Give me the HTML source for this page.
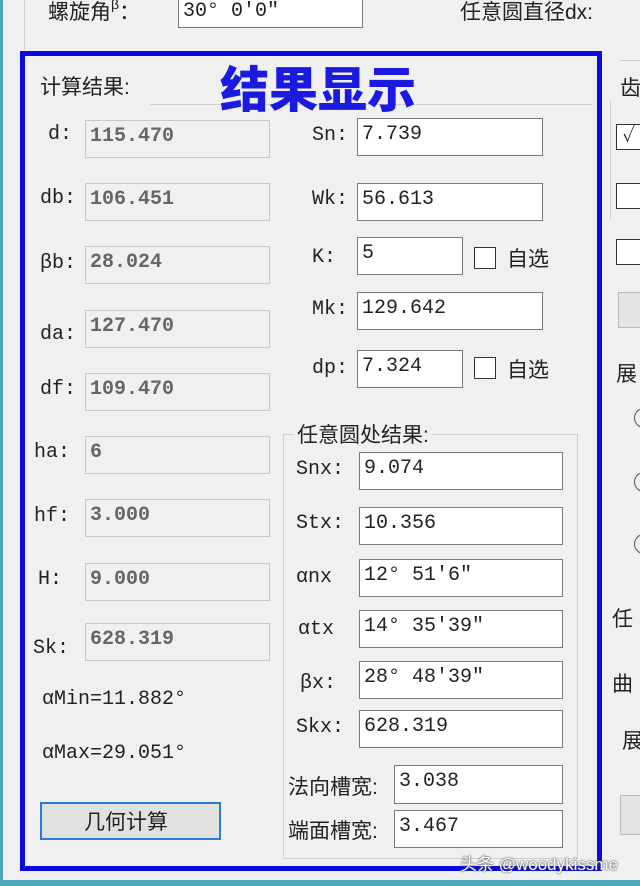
<!DOCTYPE html>
<html><head><meta charset="utf-8"><style>
body{margin:0;width:640px;height:886px;background:#f0f0f0;position:relative;overflow:hidden;font-family:"Liberation Serif","Noto Serif CJK SC",serif;color:#222}
div{position:absolute;box-sizing:border-box}
.t{font-size:20px;white-space:nowrap;font-family:"Liberation Mono","Noto Sans CJK SC",monospace}
.c{font-family:"Liberation Sans","Noto Sans CJK SC",sans-serif;font-size:21px;white-space:nowrap}
.ro{background:#f0f0f0;border:1.5px solid #c8c8c8;color:#666;font-family:"Liberation Mono",monospace;font-size:20px;padding:0 4px;line-height:32px;font-weight:bold}
.in{background:#fff;border:1.5px solid #7a7a7a;font-family:"Liberation Mono",monospace;font-size:20px;padding:0 4px;line-height:32px;color:#222}
.cb{width:22px;height:22px;border:1.5px solid #333;background:#fff}
</style></head><body>
<div style="left:0;top:0;width:3px;height:886px;background:#4aa8b8"></div>
<div style="left:0;top:880px;width:640px;height:6px;background:#4aa8b8"></div>
<div style="left:24px;top:0;width:1px;height:50px;background:#ccc"></div>
<div class="c" style="left:48px;top:-4px">螺旋角<span style="font-size:14px;vertical-align:top">β</span>：</div>
<div class="in" style="left:178px;top:-6px;width:185px;height:34px;line-height:34px">30° 0′0″</div>
<div class="c" style="left:460px;top:-4px">任意圆直径dx:</div>
<div style="left:620px;top:60px;width:20px;height:1px;background:#ccc"></div>
<div style="left:610px;top:100px;width:1px;height:120px;background:#ccc"></div>

<div style="left:20px;top:51px;width:582px;height:820px;border:5px solid #0a0ae0"></div>
<div style="left:150px;top:104px;width:442px;height:1px;background:#d0d0d0"></div>
<div class="c" style="left:40px;top:71px">计算结果:</div>
<div style="left:220px;top:54px;font-family:'Noto Sans CJK SC',sans-serif;font-weight:900;font-size:49px;color:#1a1ae0;line-height:66px">结果显示</div>

<div class="t" style="left:48px;top:123px">d:</div><div class="ro" style="left:85px;top:120px;width:185px;height:38px">115.470</div>
<div class="t" style="left:40px;top:187px">db:</div><div class="ro" style="left:85px;top:183px;width:185px;height:38px">106.451</div>
<div class="t" style="left:40px;top:252px">βb:</div><div class="ro" style="left:85px;top:246px;width:185px;height:38px">28.024</div>
<div class="t" style="left:40px;top:323px">da:</div><div class="ro" style="left:85px;top:310px;width:185px;height:38px">127.470</div>
<div class="t" style="left:40px;top:378px">df:</div><div class="ro" style="left:85px;top:373px;width:185px;height:38px">109.470</div>
<div class="t" style="left:34px;top:441px">ha:</div><div class="ro" style="left:85px;top:436px;width:185px;height:38px">6</div>
<div class="t" style="left:34px;top:505px">hf:</div><div class="ro" style="left:85px;top:499px;width:185px;height:38px">3.000</div>
<div class="t" style="left:38px;top:568px">H:</div><div class="ro" style="left:85px;top:563px;width:185px;height:38px">9.000</div>
<div class="t" style="left:33px;top:637px">Sk:</div><div class="ro" style="left:85px;top:623px;width:185px;height:38px">628.319</div>
<div class="t" style="left:42px;top:688px">αMin=11.882°</div>
<div class="t" style="left:42px;top:742px">αMax=29.051°</div>
<div style="left:40px;top:802px;width:181px;height:38px;border:2px solid #2a7ad8;background:#e1e1e1"></div>
<div class="c" style="left:84px;top:806px">几何计算</div>

<div class="t" style="left:312px;top:124px">Sn:</div><div class="in" style="left:357px;top:118px;width:186px;height:38px">7.739</div>
<div class="t" style="left:312px;top:188px">Wk:</div><div class="in" style="left:357px;top:183px;width:186px;height:38px">56.613</div>
<div class="t" style="left:312px;top:246px">K:</div><div class="in" style="left:357px;top:237px;width:106px;height:38px">5</div>
<div class="cb" style="left:474px;top:247px"></div><div class="c" style="left:507px;top:243px">自选</div>
<div class="t" style="left:312px;top:298px">Mk:</div><div class="in" style="left:357px;top:292px;width:186px;height:38px">129.642</div>
<div class="t" style="left:312px;top:357px">dp:</div><div class="in" style="left:357px;top:350px;width:106px;height:38px">7.324</div>
<div class="cb" style="left:474px;top:357px"></div><div class="c" style="left:507px;top:354px">自选</div>

<div style="left:283px;top:434px;width:295px;height:425px;border:1px solid #d0d0d0"></div>
<div class="c" style="left:294px;top:419px;background:#f0f0f0;padding:0 3px">任意圆处结果:</div>
<div class="t" style="left:296px;top:458px">Snx:</div><div class="in" style="left:359px;top:452px;width:204px;height:38px">9.074</div>
<div class="t" style="left:296px;top:512px">Stx:</div><div class="in" style="left:359px;top:507px;width:204px;height:38px">10.356</div>
<div class="t" style="left:296px;top:566px">αnx</div><div class="in" style="left:359px;top:559px;width:204px;height:38px">12° 51′6″</div>
<div class="t" style="left:298px;top:618px">αtx</div><div class="in" style="left:359px;top:610px;width:204px;height:38px">14° 35′39″</div>
<div class="t" style="left:300px;top:672px">βx:</div><div class="in" style="left:359px;top:661px;width:204px;height:38px">28° 48′39″</div>
<div class="t" style="left:296px;top:716px">Skx:</div><div class="in" style="left:359px;top:710px;width:204px;height:38px">628.319</div>
<div class="c" style="left:288px;top:771px">法向槽宽:</div><div class="in" style="left:394px;top:765px;width:169px;height:39px">3.038</div>
<div class="c" style="left:288px;top:815px">端面槽宽:</div><div class="in" style="left:394px;top:810px;width:169px;height:38px">3.467</div>

<div class="c" style="left:620px;top:72px">齿</div>
<div class="cb" style="left:616px;top:124px;width:26px;height:26px;font-size:20px;line-height:22px;text-align:center">✓</div>
<div class="cb" style="left:616px;top:183px;width:26px;height:26px"></div>
<div class="cb" style="left:616px;top:239px;width:26px;height:26px"></div>
<div style="left:618px;top:292px;width:30px;height:36px;border:1px solid #bbb;background:#e4e4e4"></div>
<div class="c" style="left:616px;top:358px">展</div>
<div style="left:634px;top:408px;width:20px;height:20px;border:1.5px solid #555;border-radius:50%"></div>
<div style="left:634px;top:472px;width:20px;height:20px;border:1.5px solid #555;border-radius:50%"></div>
<div style="left:634px;top:534px;width:20px;height:20px;border:1.5px solid #555;border-radius:50%"></div>
<div class="c" style="left:612px;top:603px">任</div>
<div class="c" style="left:612px;top:668px">曲</div>
<div class="c" style="left:622px;top:725px">展</div>
<div style="left:620px;top:795px;width:30px;height:40px;border:1px solid #bbb;background:#e4e4e4"></div>
<div style="left:460px;top:850px;font-family:'Liberation Sans','Noto Sans CJK SC',sans-serif;font-size:17px;color:#fff;text-shadow:0 0 2px #555,0 0 1px #333">头条 @woodykissme</div>
</body></html>
